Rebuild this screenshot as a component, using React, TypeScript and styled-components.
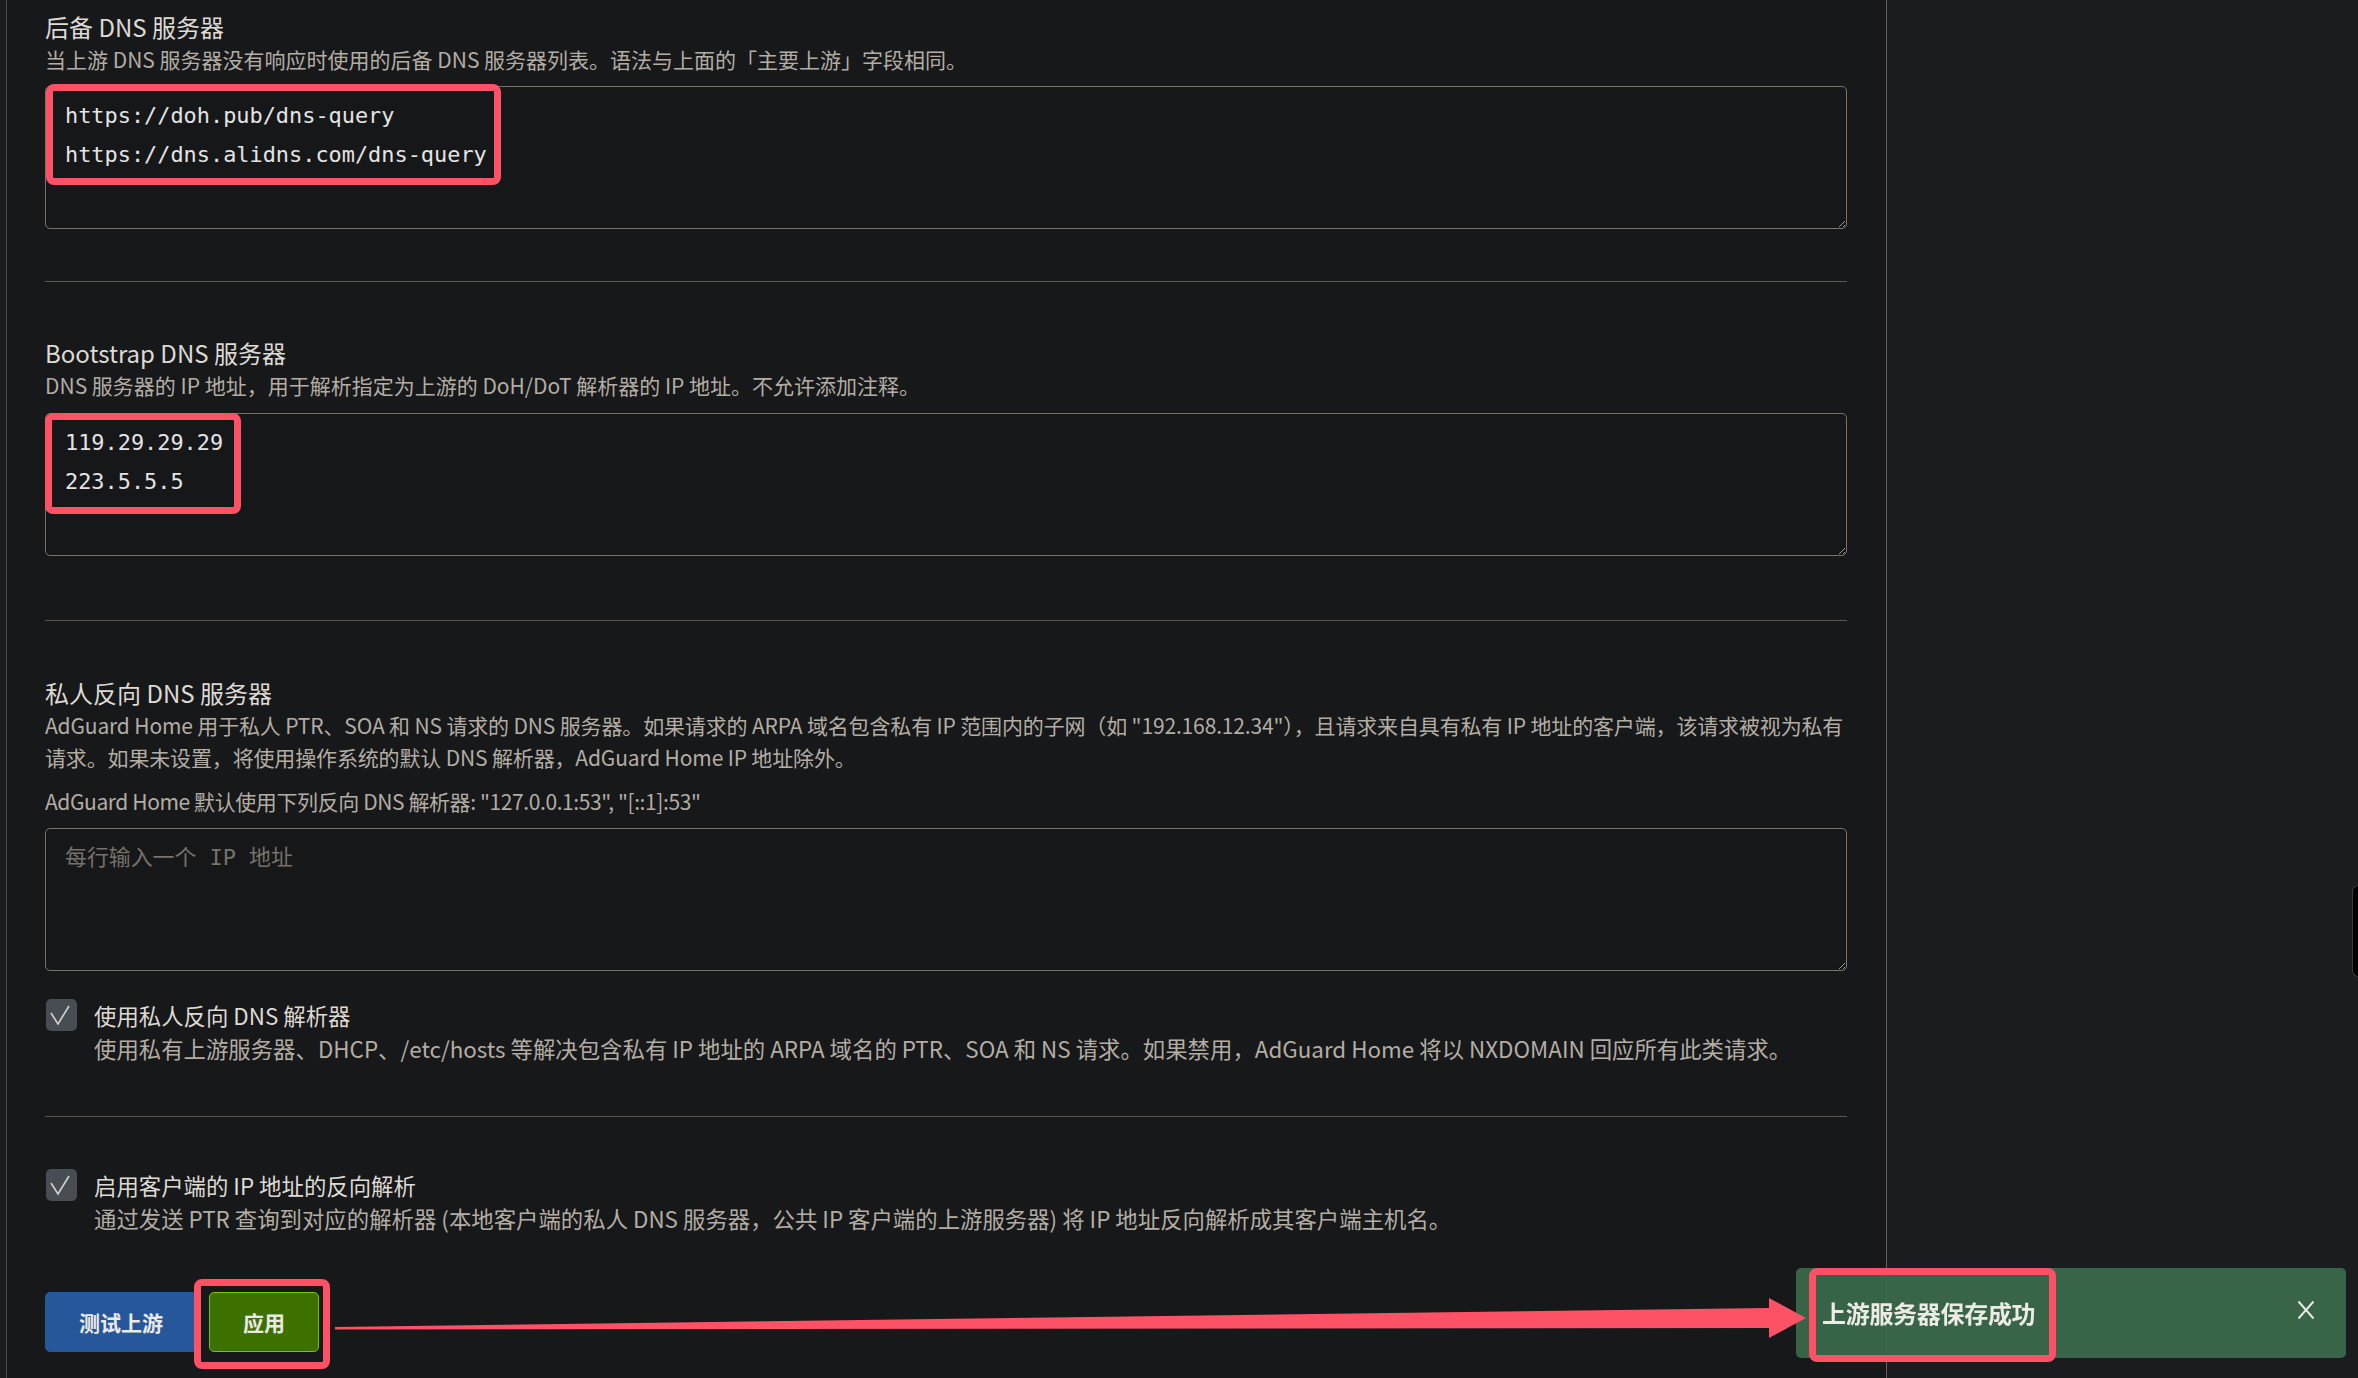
import React from "react";
import styled, { createGlobalStyle } from "styled-components";

const GlobalStyle = createGlobalStyle`
  html, body {
    margin: 0;
    padding: 0;
    background: #1b1c1f;
    color-scheme: dark;
  }
  body {
    font-family: "Noto Sans CJK SC", "Noto Sans", sans-serif;
    overflow: hidden;
  }
`;

const Page = styled.div`
  display: flex;
  height: 1378px;
`;

const Card = styled.main`
  margin-left: 6px;
  width: 1881px;
  height: 100%;
  box-sizing: border-box;
  border-left: 1px solid #4f4943;
  border-right: 1px solid #6a6258;
  background: #17181a;
  padding: 11px 39px 0 38px;
  overflow: hidden;
`;

const Title = styled.h3<{ $mt?: number }>`
  margin: ${(p) => p.$mt ?? 0}px 0 0;
  font-size: 24px;
  line-height: 32px;
  font-weight: 400;
  color: #dedad4;
`;

const Desc = styled.p<{ $mt?: number; $spacing?: number }>`
  margin: ${(p) => p.$mt ?? 0}px 0 0;
  font-size: 21px;
  line-height: 32px;
  color: #b3ada4;
  letter-spacing: ${(p) => p.$spacing ?? 0}px;
`;

const Line = styled.span`
  display: block;
  white-space: nowrap;
`;

const Field = styled.div<{ $mt: number }>`
  position: relative;
  margin-top: ${(p) => p.$mt}px;
`;

const TextArea = styled.textarea`
  display: block;
  width: 100%;
  height: 143px;
  box-sizing: border-box;
  border: 1px solid #7b7267;
  border-radius: 5px;
  background: #161719;
  color: #e4e4e4;
  font-family: "DejaVu Sans Mono", "Noto Sans CJK SC", monospace;
  font-size: 21.9px;
  line-height: 39px;
  padding: 9px 19px;
  outline: none;
  &::placeholder {
    color: #77726a;
  }
`;

const Highlight = styled.div<{ $x: number; $y: number; $w: number; $h: number }>`
  position: absolute;
  left: ${(p) => p.$x}px;
  top: ${(p) => p.$y}px;
  width: ${(p) => p.$w}px;
  height: ${(p) => p.$h}px;
  box-sizing: border-box;
  border: 7px solid #fd5166;
  border-radius: 8px;
  pointer-events: none;
  z-index: 5;
`;

const Divider = styled.div<{ $mt: number }>`
  margin-top: ${(p) => p.$mt}px;
  height: 1px;
  background: #5d564e;
`;

const CheckRow = styled.div<{ $mt: number }>`
  display: flex;
  align-items: flex-start;
  gap: 17px;
  margin-top: ${(p) => p.$mt}px;
  padding-left: 1px;
`;

const CheckBox = styled.span`
  flex-shrink: 0;
  width: 31px;
  height: 32px;
  border-radius: 5px;
  background: #484d53;
  display: flex;
`;

const CheckText = styled.div`
  display: flex;
  flex-direction: column;
`;

const CheckLabel = styled.span`
  font-size: 22.4px;
  line-height: 33px;
  color: #dedad4;
`;

const CheckDesc = styled.span`
  font-size: 22.4px;
  line-height: 32px;
  color: #b3ada4;
`;

const ButtonRow = styled.div`
  display: flex;
  gap: 12px;
  margin-top: 58px;
`;

const ButtonWrap = styled.div`
  position: relative;
  display: flex;
`;

const Button = styled.button<{ $variant: "blue" | "green" }>`
  height: 60px;
  box-sizing: border-box;
  padding: 0 33px;
  border-radius: 5px;
  border: 1px solid ${(p) => (p.$variant === "blue" ? "#27579b" : "#72c700")};
  background: ${(p) => (p.$variant === "blue" ? "#27579b" : "#3c7100")};
  color: #eceae6;
  font-family: "Noto Sans CJK SC", sans-serif;
  font-size: 21px;
  font-weight: 700;
  cursor: pointer;
`;

const Toast = styled.div`
  position: fixed;
  right: 12px;
  bottom: 20px;
  width: 550px;
  height: 90px;
  box-sizing: border-box;
  border-radius: 5px;
  background: rgba(58, 106, 74, 0.93);
  display: flex;
  align-items: center;
  justify-content: space-between;
  padding: 0 31px 2px 26px;
  z-index: 10;
`;

const ToastText = styled.span`
  font-size: 24px;
  font-weight: 700;
  color: #ecebe4;
  letter-spacing: -0.3px;
`;

const CloseButton = styled.span`
  display: flex;
  width: 18px;
  height: 20px;
  margin-bottom: 4px;
`;

const ArrowLayer = styled.svg`
  position: fixed;
  left: 0;
  top: 0;
  width: 2358px;
  height: 1378px;
  pointer-events: none;
  z-index: 20;
`;

const EdgeTab = styled.div`
  position: fixed;
  right: 0;
  top: 885px;
  width: 5px;
  height: 90px;
  background: #000;
  border: 1px solid #3c3c3c;
  border-right: none;
  border-radius: 6px 0 0 6px;
`;

const Check = () => (
  <svg width="31" height="32" viewBox="0 0 31 32">
    <polyline
      points="5,14 12,25 23,7"
      fill="none"
      stroke="#d2d2d2"
      strokeWidth="1.6"
      strokeLinejoin="miter"
    />
  </svg>
);

export default function App() {
  return (
    <>
      <GlobalStyle />
      <Page>
        <Card>
          <Title>后备 DNS 服务器</Title>
          <Desc>当上游 DNS 服务器没有响应时使用的后备 DNS 服务器列表。语法与上面的「主要上游」字段相同。</Desc>
          <Field $mt={11}>
            <TextArea
              readOnly
              spellCheck={false}
              defaultValue={"https://doh.pub/dns-query\nhttps://dns.alidns.com/dns-query"}
            />
            <Highlight $x={1} $y={-2} $w={455} $h={101} />
          </Field>

          <Divider $mt={52} />

          <Title $mt={55}>Bootstrap DNS 服务器</Title>
          <Desc>DNS 服务器的 IP 地址，用于解析指定为上游的 DoH/DoT 解析器的 IP 地址。不允许添加注释。</Desc>
          <Field $mt={12}>
            <TextArea readOnly spellCheck={false} defaultValue={"119.29.29.29\n223.5.5.5"} />
            <Highlight $x={0} $y={0} $w={196} $h={101} />
          </Field>

          <Divider $mt={64} />

          <Title $mt={56}>私人反向 DNS 服务器</Title>
          <Desc $spacing={-0.15}>
            <Line>
              AdGuard Home 用于私人 PTR、SOA 和 NS 请求的 DNS 服务器。如果请求的 ARPA 域名包含私有 IP 范围内的子网（如 "192.168.12.34"），且请求来自具有私有 IP 地址的客户端，该请求被视为私有
            </Line>
            <Line>请求。如果未设置，将使用操作系统的默认 DNS 解析器，AdGuard Home IP 地址除外。</Line>
          </Desc>
          <Desc $mt={12} $spacing={-0.4}>
            AdGuard Home 默认使用下列反向 DNS 解析器: "127.0.0.1:53", "[::1]:53"
          </Desc>
          <Field $mt={11}>
            <TextArea readOnly spellCheck={false} placeholder="每行输入一个 IP 地址" />
          </Field>

          <CheckRow $mt={28}>
            <CheckBox>
              <Check />
            </CheckBox>
            <CheckText>
              <CheckLabel>使用私人反向 DNS 解析器</CheckLabel>
              <CheckDesc>
                使用私有上游服务器、DHCP、/etc/hosts 等解决包含私有 IP 地址的 ARPA 域名的 PTR、SOA 和 NS 请求。如果禁用，AdGuard Home 将以 NXDOMAIN 回应所有此类请求。
              </CheckDesc>
            </CheckText>
          </CheckRow>

          <Divider $mt={52} />

          <CheckRow $mt={52}>
            <CheckBox>
              <Check />
            </CheckBox>
            <CheckText>
              <CheckLabel>启用客户端的 IP 地址的反向解析</CheckLabel>
              <CheckDesc>
                通过发送 PTR 查询到对应的解析器 (本地客户端的私人 DNS 服务器，公共 IP 客户端的上游服务器) 将 IP 地址反向解析成其客户端主机名。
              </CheckDesc>
            </CheckText>
          </CheckRow>

          <ButtonRow>
            <Button $variant="blue">测试上游</Button>
            <ButtonWrap>
              <Button $variant="green">应用</Button>
              <Highlight $x={-15} $y={-13} $w={136} $h={90} />
            </ButtonWrap>
          </ButtonRow>
        </Card>
      </Page>

      <Toast>
        <ToastText>上游服务器保存成功</ToastText>
        <CloseButton>
          <svg width="18" height="20" viewBox="0 0 18 20">
            <line x1="1.5" y1="1.5" x2="16.5" y2="18.5" stroke="#ecebe4" strokeWidth="2" />
            <line x1="16.5" y1="1.5" x2="1.5" y2="18.5" stroke="#ecebe4" strokeWidth="2" />
          </svg>
        </CloseButton>
        <Highlight $x={13} $y={0} $w={247} $h={94} />
      </Toast>

      <ArrowLayer viewBox="0 0 2358 1378">
        <polygon
          points="335,1327 1769,1308 1769,1298 1806,1318 1769,1338 1769,1328 335,1329.5"
          fill="#fd5166"
        />
      </ArrowLayer>

      <EdgeTab />
    </>
  );
}
